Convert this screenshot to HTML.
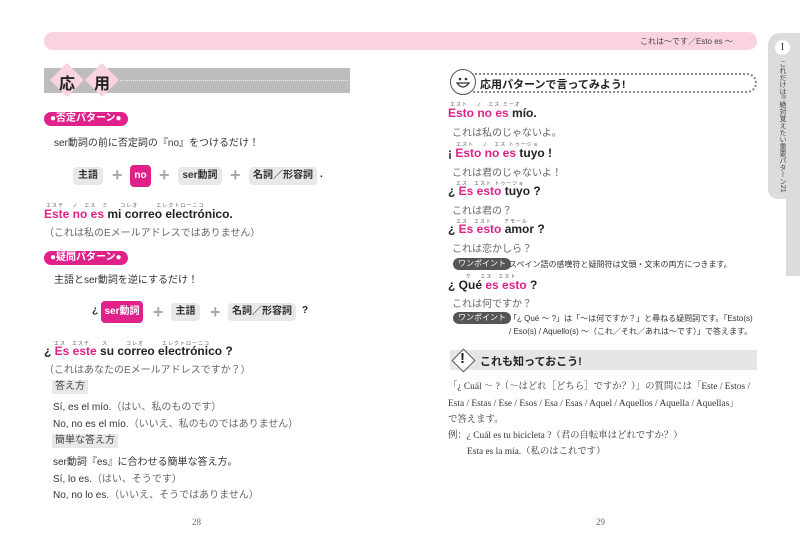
<!DOCTYPE html>
<html><head><meta charset="utf-8"><style>
*{margin:0;padding:0;box-sizing:border-box}
body{width:800px;height:550px;background:#fff;position:relative;overflow:hidden;font-family:"Liberation Sans","Noto Sans CJK JP",sans-serif;color:#333}
.a{position:absolute;white-space:nowrap}
.j{font-size:10px;color:#333}
.g{font-size:10px;color:#666}
.b{font-size:12px;font-weight:bold;color:#222}
.p{color:#e0218a}
.r{font-size:5px;color:#555;letter-spacing:1px}
.pill{position:absolute;background:#e0218a;color:#fff;font-size:10px;font-weight:bold;border-radius:8px;height:14px;line-height:14px;padding:0 6px}
.box{position:absolute;background:#e8e8e8;border-radius:4px;height:18px;line-height:18px;font-size:10px;font-weight:bold;color:#333;text-align:center}
.pb{background:#e0218a;color:#fff}
.plus{position:absolute;font-size:18px;color:#aaa;font-weight:bold;line-height:18px}
.tag{position:absolute;background:#e8e8e8;font-size:10px;color:#444;height:14px;line-height:14px;padding:0 3px}
.wp{position:absolute;background:#555;color:#fff;font-size:8px;border-radius:6px;height:12px;line-height:12px;padding:0 5px}
.s{font-family:"Liberation Serif","Noto Serif CJK SC",serif;font-size:9.4px;color:#333}
</style></head><body>
<div class="a" style="left:44px;top:32px;width:713px;height:18px;background:#f9d3e2;border-radius:9px"></div>
<div class="a" style="left:640px;top:36px;font-size:8px;color:#444">これは〜です／Esto es 〜</div>
<div class="a" style="left:768px;top:33px;width:32px;height:166px;background:#dcdcdc;border-radius:12px 0 0 10px"></div>
<div class="a" style="left:786px;top:190px;width:14px;height:86px;background:#dcdcdc"></div>
<div class="a" style="left:775px;top:40px;width:15px;height:15px;border-radius:50%;background:#fff;font-family:'Liberation Serif',serif;font-size:10px;text-align:center;line-height:15px">I</div>
<div class="a" style="left:778px;top:60px;writing-mode:vertical-rl;font-size:7px;color:#444;line-height:9px">これだけは!! 絶対覚えたい重要パターン21</div>

<div class="a" style="left:44px;top:68px;width:306px;height:25px;background:#bdbdbd"></div>
<div class="a" style="left:120px;top:80px;width:228px;border-top:1px dotted #eee"></div>
<div class="a" style="left:55px;top:68px;width:24px;height:24px;background:#f9d3e2;transform:rotate(45deg)"></div>
<div class="a" style="left:90px;top:68px;width:24px;height:24px;background:#f9d3e2;transform:rotate(45deg)"></div>
<div class="a" style="left:59px;top:70px;font-size:16px;font-weight:bold;color:#222">応</div>
<div class="a" style="left:94px;top:70px;font-size:16px;font-weight:bold;color:#222">用</div>

<div class="pill" style="left:44px;top:112px">●否定パターン●</div>
<div class="a j" style="left:54px;top:134px">ser動詞の前に否定詞の『no』をつけるだけ！</div>
<div class="box" style="left:73px;top:167px;width:30px">主語</div>
<div class="plus" style="left:112px;top:166px">+</div>
<div class="box pb" style="left:130px;top:165px;width:21px;height:22px;line-height:22px">no</div>
<div class="plus" style="left:159px;top:166px">+</div>
<div class="box" style="left:178px;top:167px;width:44px">ser動詞</div>
<div class="plus" style="left:230px;top:166px">+</div>
<div class="box" style="left:249px;top:167px;width:68px">名詞／形容詞</div>
<div class="a b" style="left:320px;top:169px;font-size:10px">.</div>

<div class="a r" style="left:46px;top:202px">エステ　 ノ　エス　ミ　　コレオ　　　エレクトローニコ</div>
<div class="a b" style="left:44px;top:207px"><span class="p">Este no es</span> mi correo electrónico.</div>
<div class="a g" style="left:44px;top:224px">（これは私のEメールアドレスではありません）</div>

<div class="pill" style="left:44px;top:251px">●疑問パターン●</div>
<div class="a j" style="left:54px;top:271px">主語とser動詞を逆にするだけ！</div>
<div class="a b" style="left:92px;top:305px;font-size:10px">¿</div>
<div class="box pb" style="left:101px;top:301px;width:42px;height:22px;line-height:22px">ser動詞</div>
<div class="plus" style="left:153px;top:303px">+</div>
<div class="box" style="left:171px;top:303px;width:29px">主語</div>
<div class="plus" style="left:210px;top:303px">+</div>
<div class="box" style="left:228px;top:303px;width:68px">名詞／形容詞</div>
<div class="a b" style="left:302px;top:305px;font-size:10px">?</div>

<div class="a r" style="left:54px;top:340px">エス　エステ　　ス　　　コレオ　　　エレクトローニコ</div>
<div class="a b" style="left:44px;top:344px">¿ <span class="p">Es este</span> su correo electrónico ?</div>
<div class="a g" style="left:44px;top:361px">（これはあなたのEメールアドレスですか？）</div>
<div class="tag" style="left:52px;top:380px">答え方</div>
<div class="a j" style="left:53px;top:398px">Sí, es el mío.<span style="color:#666">（はい、私のものです）</span></div>
<div class="a j" style="left:53px;top:415px">No, no es el mío.<span style="color:#666">（いいえ、私のものではありません）</span></div>
<div class="tag" style="left:52px;top:434px">簡単な答え方</div>
<div class="a j" style="left:53px;top:453px">ser動詞『es』に合わせる簡単な答え方。</div>
<div class="a j" style="left:53px;top:470px">Sí, lo es.<span style="color:#666">（はい、そうです）</span></div>
<div class="a j" style="left:53px;top:486px">No, no lo es.<span style="color:#666">（いいえ、そうではありません）</span></div>
<div class="a s" style="left:192px;top:517px;font-size:9px;color:#666">28</div>

<div class="a" style="left:465px;top:73px;width:292px;height:20px;border:2px dotted #888;border-radius:10px;background:#fff"></div>
<div class="a" style="left:450px;top:69px;width:26px;height:26px;border:1.5px solid #555;border-radius:50%;background:#fff"></div>
<svg class="a" style="left:450px;top:69px" width="26" height="26"><circle cx="10" cy="10" r="1.3" fill="#333"/><circle cx="16" cy="10" r="1.3" fill="#333"/><path d="M7 14 Q13 22 19 14 Z" fill="none" stroke="#333" stroke-width="1.3"/></svg>
<div class="a" style="left:480px;top:76px;font-size:11px;font-weight:bold;color:#222">応用パターンで言ってみよう!</div>

<div class="a r" style="left:450px;top:101px">エスト　 ノ　エス ミーオ</div>
<div class="a b" style="left:448px;top:106px"><span class="p">Esto no es</span> mío.</div>
<div class="a g" style="left:452px;top:124px">これは私のじゃないよ。</div>
<div class="a r" style="left:456px;top:141px">エスト　 ノ　エス トゥージョ</div>
<div class="a b" style="left:448px;top:146px">¡ <span class="p">Esto no es</span> tuyo !</div>
<div class="a g" style="left:452px;top:164px">これは君のじゃないよ！</div>
<div class="a r" style="left:456px;top:180px">エス　エスト トゥージョ</div>
<div class="a b" style="left:448px;top:184px">¿ <span class="p">Es esto</span> tuyo ?</div>
<div class="a g" style="left:452px;top:202px">これは君の？</div>
<div class="a r" style="left:456px;top:218px">エス　エスト　　アモール</div>
<div class="a b" style="left:448px;top:222px">¿ <span class="p">Es esto</span> amor ?</div>
<div class="a g" style="left:452px;top:240px">これは恋かしら？</div>
<div class="wp" style="left:453px;top:258px">ワンポイント</div>
<div class="a" style="left:509px;top:259px;font-size:8px;color:#333">スペイン語の感嘆符と疑問符は文頭・文末の両方につきます。</div>
<div class="a r" style="left:466px;top:273px">ケ　 エス　エスト</div>
<div class="a b" style="left:448px;top:278px">¿ Qué <span class="p">es esto</span> ?</div>
<div class="a g" style="left:452px;top:295px">これは何ですか？</div>
<div class="wp" style="left:453px;top:312px">ワンポイント</div>
<div class="a" style="left:509px;top:313px;font-size:8px;color:#333">「¿ Qué 〜 ?」は「〜は何ですか？」と尋ねる疑問詞です。「Esto(s)</div>
<div class="a" style="left:509px;top:326px;font-size:8px;color:#333">/ Eso(s) / Aquello(s) 〜（これ／それ／あれは〜です）」で答えます。</div>

<div class="a" style="left:450px;top:350px;width:307px;height:20px;background:#e6e6e6"></div>
<div class="a" style="left:455px;top:352px;width:17px;height:17px;border:1.5px solid #555;transform:rotate(45deg);background:#fff"></div>
<div class="a" style="left:460px;top:350px;font-size:15px;font-weight:900;color:#222">!</div>
<div class="a" style="left:480px;top:353px;font-size:11px;font-weight:bold;color:#222">これも知っておこう!</div>

<div class="a s" style="left:448px;top:378px">「¿ Cuál 〜 ?（〜はどれ［どちら］ですか？）」の質問には「Este / Estos /</div>
<div class="a s" style="left:448px;top:395px">Esta / Estas / Ese / Esos / Esa / Esas / Aquel / Aquellos / Aquella / Aquellas」</div>
<div class="a s" style="left:448px;top:411px">で答えます。</div>
<div class="a s" style="left:448px;top:427px">例：¿ Cuál es tu bicicleta ?（君の自転車はどれですか？）</div>
<div class="a s" style="left:467px;top:443px">Esta es la mía.（私のはこれです）</div>
<div class="a s" style="left:596px;top:517px;font-size:9px;color:#666">29</div>
</body></html>
